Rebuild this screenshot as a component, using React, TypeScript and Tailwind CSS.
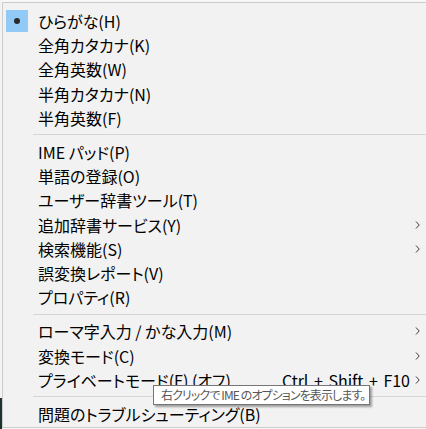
import React from 'react';

type Item = { t: string; checked?: boolean; sub?: boolean; shortcut?: string };

const groups: Item[][] = [
  [
    { t: 'ひらがな(H)', checked: true },
    { t: '全角カタカナ(K)' },
    { t: '全角英数(W)' },
    { t: '半角カタカナ(N)' },
    { t: '半角英数(F)' },
  ],
  [
    { t: 'IME パッド(P)' },
    { t: '単語の登録(O)' },
    { t: 'ユーザー辞書ツール(T)' },
    { t: '追加辞書サービス(Y)', sub: true },
    { t: '検索機能(S)', sub: true },
    { t: '誤変換レポート(V)' },
    { t: 'プロパティ(R)' },
  ],
  [
    { t: 'ローマ字入力 / かな入力(M)', sub: true },
    { t: '変換モード(C)', sub: true },
    { t: 'プライベートモード(F) (オフ)', shortcut: 'Ctrl + Shift + F10', sub: true },
  ],
  [{ t: '問題のトラブルシューティング(B)' }],
];

function Chevron() {
  return (
    <svg width="5" height="8" viewBox="0 0 5 8" className="block">
      <path d="M1 0.5 L4.2 4 L1 7.5" fill="none" stroke="#3c3c3c" strokeWidth="1" />
    </svg>
  );
}

function Row({ item }: { item: Item }) {
  return (
    <div className="flex items-center h-[24.2px] text-[16px] leading-none text-black">
      <div className="w-[35px] h-full flex items-center pl-[3px] shrink-0">
        {item.checked && (
          <div className="w-[22px] h-[22px] bg-[#91c9f7] flex items-center justify-center">
            <div className="w-[6px] h-[6px] rounded-full bg-[#2b2b2b]" />
          </div>
        )}
      </div>
      <div className="flex-1 whitespace-nowrap">{item.t}</div>
      {item.shortcut && (
        <div className="whitespace-nowrap pr-[5px] [word-spacing:2px]">{item.shortcut}</div>
      )}
      <div className="w-[6px] flex items-center">{item.sub && <Chevron />}</div>
      <div className="w-[12px]" />
    </div>
  );
}

export default function App() {
  return (
    <div className="w-[426px] h-[429px] overflow-hidden flex bg-[#f7f7f7] relative font-['Noto_Sans_CJK_JP','Noto_Sans',sans-serif] [font-feature-settings:'palt']">
      <div className="w-[2px] flex flex-col shrink-0">
        <div className="h-[398px] bg-[#f3f3f3]" />
        <div className="flex-1 bg-[#1d3232]" />
      </div>
      <div className="flex flex-col shrink-0">
        <div className="h-[2px] bg-[#f7f7f7]" />
        <div className="w-[432px] h-[426px] border border-[#cccccc] bg-[#f2f2f2] pt-[6px] flex flex-col">
          {groups.map((g, gi) => (
            <React.Fragment key={gi}>
              {gi > 0 && (
                <div className="h-[10px] flex items-center pl-[30px]">
                  <div className="h-px flex-1 bg-[#d5d5d5]" />
                </div>
              )}
              {g.map((it, i) => (
                <Row key={i} item={it} />
              ))}
            </React.Fragment>
          ))}
        </div>
      </div>
      <div className="absolute left-[153px] top-[385px] w-[217px] h-[20px] bg-white border border-[#767676] shadow-[2px_2px_2px_rgba(0,0,0,0.35)] flex items-center pl-[7px] text-[12px] leading-none tracking-[-0.9px] text-[#575757] whitespace-nowrap">
        右クリックで IME のオプションを表示します。
      </div>
    </div>
  );
}
